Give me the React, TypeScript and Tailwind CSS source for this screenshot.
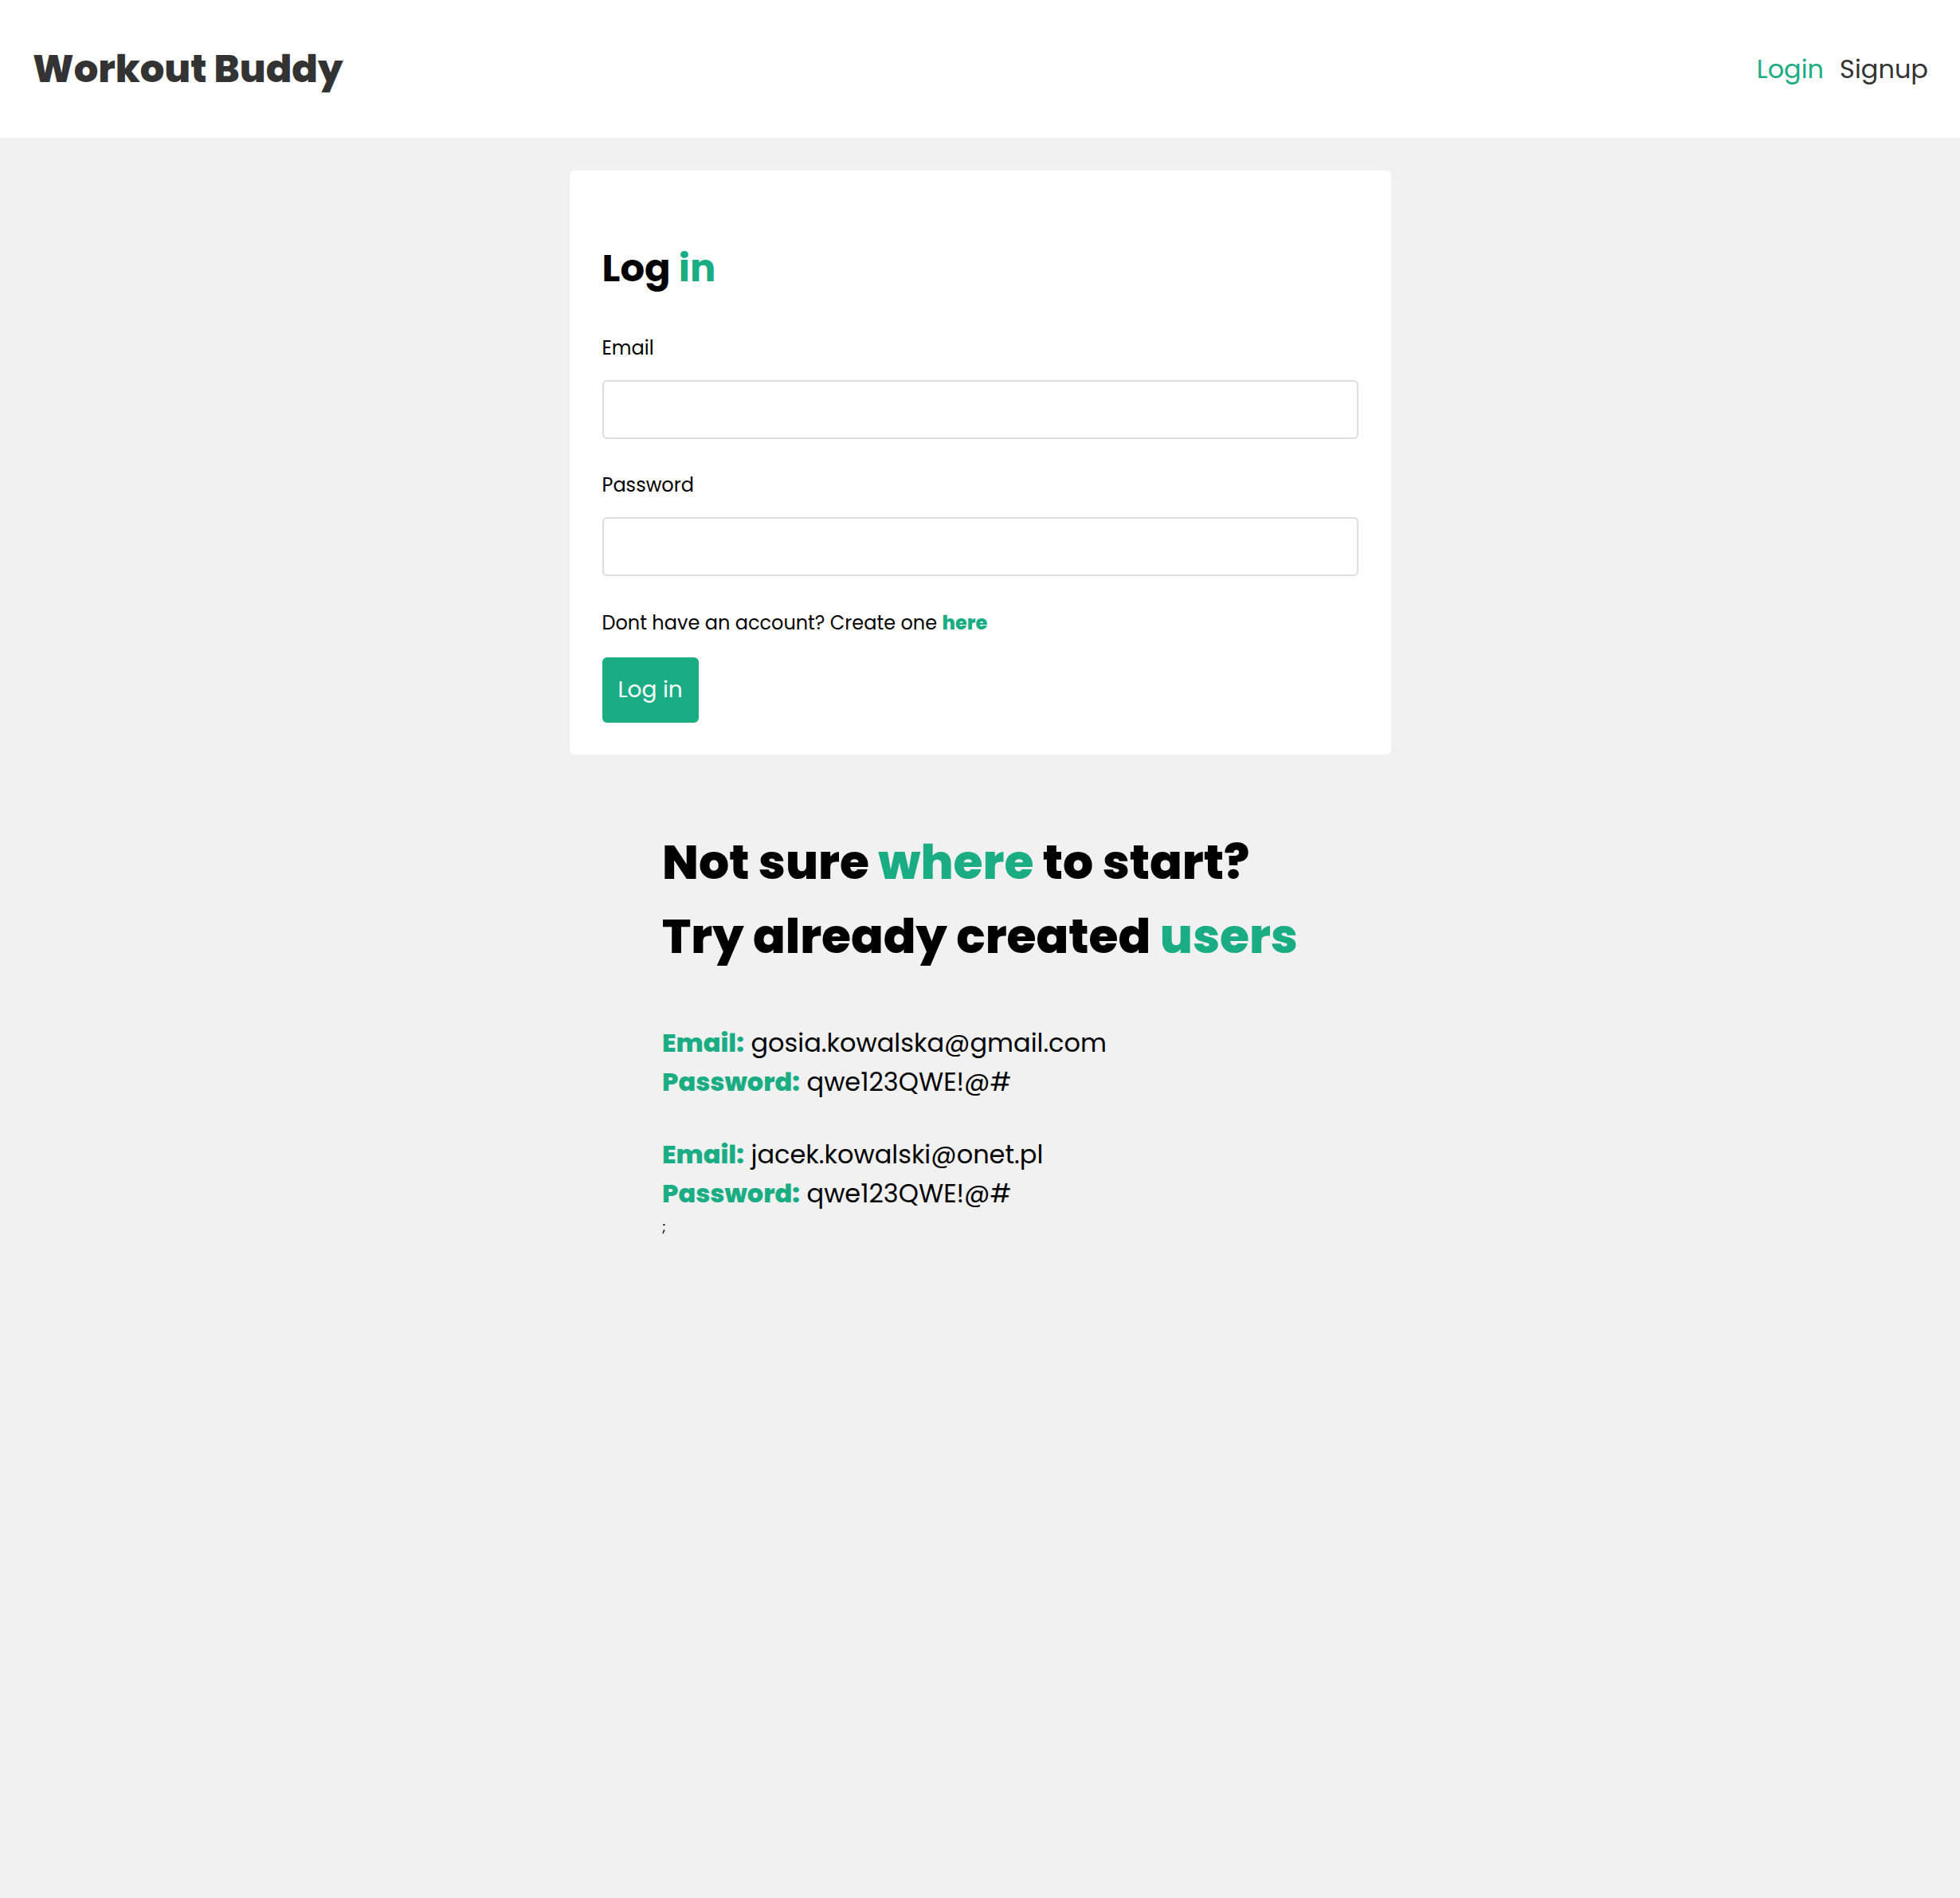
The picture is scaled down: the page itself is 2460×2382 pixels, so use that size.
const font = { fontFamily: "Poppins, Inter, 'Noto Sans', sans-serif" }

function Header() {
  return (
    <header className="bg-white">
      <div className="flex h-[173px] items-center justify-between pl-[41px] pr-[40px]">
        <h1 className="text-[48px] font-extrabold leading-[72px] text-[#333]">Workout Buddy</h1>
        <nav className="flex items-center gap-[20px] text-[32px] leading-[48px]">
          <a className="text-[#1aac83]">Login</a>
          <a className="text-[#333]">Signup</a>
        </nav>
      </div>
    </header>
  )
}

function Field({ label, type }: { label: string; type: string }) {
  return (
    <div className="flex flex-col">
      <label className="text-[24px] leading-[36px] text-black">{label}</label>
      <input
        type={type}
        className="mt-[22px] h-[74px] w-full rounded-[6px] border-2 border-[#ddd] bg-white px-4 text-[24px] outline-none"
      />
    </div>
  )
}

function LoginCard() {
  return (
    <form className="mx-auto mt-[41px] w-[1031px] rounded-[6px] bg-white px-[41px] pt-[87px] pb-[40px]">
      <h3 className="text-[48px] font-bold leading-[72px] text-black">
        Log <span className="text-[#1aac83]">in</span>
      </h3>
      <div className="mt-[46px]">
        <Field label="Email" type="email" />
      </div>
      <div className="mt-[40px]">
        <Field label="Password" type="password" />
      </div>
      <p className="mt-[41px] text-[24px] leading-[36px] text-black">
        Dont have an account? Create one <a className="font-extrabold text-[#1aac83]">here</a>
      </p>
      <button
        type="button"
        className="mt-[25px] h-[82px] rounded-[6px] bg-[#1aac83] px-[20px] text-[28px] leading-[82px] text-white"
      >
        Log in
      </button>
    </form>
  )
}

const users = [
  { email: "gosia.kowalska@gmail.com", password: "qwe123QWE!@#" },
  { email: "jacek.kowalski@onet.pl", password: "qwe123QWE!@#" },
]

function DemoUsers() {
  return (
    <div className="mx-auto mt-[89px] w-fit">
      <h2 className="text-[60px] font-extrabold leading-[93px] text-black">
        Not sure <span className="text-[#1aac83]">where</span> to start?
      </h2>
      <h2 className="text-[60px] font-extrabold leading-[93px] text-black">
        Try already created <span className="text-[#1aac83]">users</span>
      </h2>
      <div className="mt-[62px] flex flex-col gap-[42px]">
        {users.map((u) => (
          <div key={u.email} className="text-[32px] leading-[49px] text-black">
            <p>
              <span className="font-extrabold text-[#1aac83]">Email:</span> {u.email}
            </p>
            <p>
              <span className="font-extrabold text-[#1aac83]">Password:</span> {u.password}
            </p>
          </div>
        ))}
      </div>
      <p className="mt-[4px] text-[18px] leading-[27px] text-black">;</p>
    </div>
  )
}

export default function App() {
  return (
    <div className="min-h-screen bg-[#f1f1f1]" style={font}>
      <Header />
      <LoginCard />
      <DemoUsers />
    </div>
  )
}
